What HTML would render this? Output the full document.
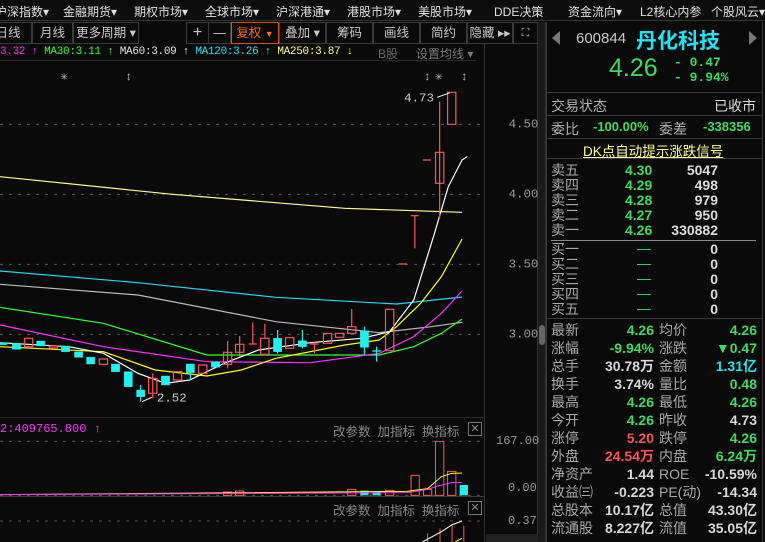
<!DOCTYPE html>
<html><head><meta charset="utf-8"><style>
*{margin:0;padding:0;box-sizing:border-box}
body{width:765px;height:542px;background:#0a0a0a;overflow:hidden;position:relative;font-family:"Liberation Sans","Noto Sans CJK SC",sans-serif;color:#c8c8c8}
.a{position:absolute;white-space:nowrap}
.nav{font-size:12px;color:#e0e0e0;top:3px}
.tb{position:absolute;top:22px;height:22px;border:1px solid #3a3a3a;font-size:12.5px;color:#c8c8c8;text-align:center;line-height:20px}
.g{color:#3ddc5f}.r{color:#ff5252}.c{color:#20e4f4}.w{color:#d8d8d8}
.m{font-family:"Liberation Mono","Noto Sans CJK SC",monospace}
.lab{font-size:14px;color:#b0b0b0}
.hl{position:absolute;height:1px;background:#3a3a3a}
.q{position:absolute;font-size:14px;line-height:15px}
.s{position:absolute;font-size:14px;line-height:18px;font-weight:bold}
.s .l{font-weight:normal;color:#a8a8a8}
</style></head><body>
<div class="a" style="left:0;top:0;width:765px;height:21px;background:#0d0d0d;border-bottom:1px solid #333"></div>
<div class="a nav" style="left:-5px">沪深指数▾</div>
<div class="a nav" style="left:63px">金融期货▾</div>
<div class="a nav" style="left:134px">期权市场▾</div>
<div class="a nav" style="left:205px">全球市场▾</div>
<div class="a nav" style="left:276px">沪深港通▾</div>
<div class="a nav" style="left:347px">港股市场▾</div>
<div class="a nav" style="left:418px">美股市场▾</div>
<div class="a nav" style="left:494px">DDE决策</div>
<div class="a nav" style="left:568px">资金流向▾</div>
<div class="a nav" style="left:640px">L2核心内参</div>
<div class="a nav" style="left:711px">个股风云▾</div>
<div class="tb" style="left:-16px;width:48px">日线</div>
<div class="tb" style="left:32px;width:41px">月线</div>
<div class="tb" style="left:73px;width:66px">更多周期 ▾</div>
<div class="tb" style="left:186px;width:23px;font-size:16px">+</div>
<div class="tb" style="left:208px;width:23px">—</div>
<div class="tb" style="left:231px;width:48px;border-color:#e0501a;color:#ff6a20">复权 <span style="font-size:9px">▼</span></div>
<div class="tb" style="left:279px;width:47px">叠加 ▾</div>
<div class="tb" style="left:326px;width:47px">筹码</div>
<div class="tb" style="left:373px;width:47px">画线</div>
<div class="tb" style="left:420px;width:47px">简约</div>
<div class="tb" style="left:467px;width:46px">隐藏 ▸▸</div>
<div class="tb" style="left:513px;width:25px;font-size:11px">⛶</div>
<div class="a m" style="left:0;top:46px;font-size:11px;letter-spacing:-0.3px"><span style="color:#ff30ff">3.32 ↑</span> <span style="color:#30ff30">MA30:3.11 ↑</span> <span style="color:#e0e0e0">MA60:3.09 ↑</span> <span style="color:#20e4f4">MA120:3.26 ↑</span> <span style="color:#ffff80">MA250:3.87</span> <span style="color:#ffff40">↓</span></div>
<div class="a" style="left:378px;top:45px;font-size:12px;color:#666">B股</div>
<div class="a" style="left:416px;top:45px;font-size:12px;color:#777">设置均线 ▾</div>
<div class="hl" style="left:0;top:60px;width:476px;background:#2a2a2a"></div>
<div class="a" style="left:484px;top:44px;width:1px;height:498px;background:#333"></div>
<div class="a" style="left:537px;top:22px;width:9px;height:520px;background:#1a1a1a;border-left:1px solid #333;border-right:1px solid #333"></div>
<div class="a" style="left:539px;top:325px;width:6px;height:20px;background:#666;border-radius:3px"></div>
<svg class="a" style="left:0;top:60px" width="540" height="360" viewBox="0 0 1566 1080" preserveAspectRatio="none">
<g stroke="#555" stroke-dasharray="3,6" vector-effect="non-scaling-stroke">
<line x1="0" y1="193" x2="1405" y2="193" vector-effect="non-scaling-stroke"/><line x1="0" y1="403" x2="1405" y2="403" vector-effect="non-scaling-stroke"/><line x1="0" y1="613" x2="1405" y2="613" vector-effect="non-scaling-stroke"/><line x1="0" y1="823" x2="1405" y2="823" vector-effect="non-scaling-stroke"/></g>
<g fill="none" stroke-width="1.2">
<polyline vector-effect="non-scaling-stroke" stroke="#ffff99" points="0,350 500,403 1000,445 1340,457"/>
<polyline vector-effect="non-scaling-stroke" stroke="#20d8f0" points="0,633 400,668 800,712 1150,732 1340,711"/>
<polyline vector-effect="non-scaling-stroke" stroke="#bbb" points="0,673 400,705 800,785 1100,818 1250,800 1340,787"/>
<polyline vector-effect="non-scaling-stroke" stroke="#30ff30" points="0,742 300,790 600,885 1100,885 1200,860 1280,820 1340,777"/>
<polyline vector-effect="non-scaling-stroke" stroke="#ff30ff" points="0,795 300,860 600,905 900,908 1100,880 1200,830 1280,760 1340,693"/>
<polyline vector-effect="non-scaling-stroke" stroke="#ffff00" points="0,860 300,875 450,930 600,948 700,930 800,895 1000,855 1100,840 1150,800 1220,730 1280,650 1340,537"/>
<polyline vector-effect="non-scaling-stroke" stroke="#fff" points="0,848 200,860 300,880 400,940 480,970 550,960 650,910 750,870 900,848 1050,835 1130,815 1200,720 1260,520 1300,380 1340,300 1355,290"/>
</g>
<g stroke-width="1.2">
<g fill="#20f0f0" stroke="#20f0f0">
<rect x="0" y="848" width="20" height="6"/><rect x="36" y="850" width="24" height="18"/><rect x="106" y="843" width="24" height="15"/><rect x="178" y="858" width="24" height="17"/><rect x="216" y="875" width="24" height="17"/><rect x="251" y="892" width="24" height="20"/><rect x="323" y="912" width="24" height="23"/><rect x="360" y="935" width="24" height="45"/><rect x="396" y="990" width="24" height="20"/><rect x="468" y="948" width="24" height="27"/><rect x="540" y="912" width="24" height="26"/><rect x="613" y="905" width="24" height="17"/><rect x="793" y="835" width="24" height="40"/><rect x="865" y="842" width="24" height="18"/><rect x="1045" y="812" width="24" height="50"/><rect x="1080" y="872" width="24" height="2"/>
</g>
<g fill="none" stroke="#ff5555" vector-effect="non-scaling-stroke">
<rect vector-effect="non-scaling-stroke" x="71" y="835" width="24" height="25"/><rect vector-effect="non-scaling-stroke" x="143" y="858" width="24" height="6"/><rect vector-effect="non-scaling-stroke" x="288" y="897" width="24" height="16"/><rect vector-effect="non-scaling-stroke" x="431" y="955" width="24" height="45"/><rect vector-effect="non-scaling-stroke" x="503" y="935" width="24" height="25"/><rect vector-effect="non-scaling-stroke" x="576" y="915" width="24" height="25"/><rect vector-effect="non-scaling-stroke" x="648" y="877" width="24" height="36"/><rect vector-effect="non-scaling-stroke" x="683" y="853" width="24" height="24"/><rect vector-effect="non-scaling-stroke" x="756" y="835" width="24" height="48"/><rect vector-effect="non-scaling-stroke" x="828" y="833" width="24" height="32"/><rect vector-effect="non-scaling-stroke" x="938" y="820" width="24" height="30"/><rect vector-effect="non-scaling-stroke" x="973" y="820" width="24" height="12"/><rect vector-effect="non-scaling-stroke" x="1008" y="800" width="24" height="20"/><rect vector-effect="non-scaling-stroke" x="1118" y="748" width="24" height="124"/><rect vector-effect="non-scaling-stroke" x="1263" y="277" width="24" height="93"/><rect vector-effect="non-scaling-stroke" x="1298" y="97" width="24" height="96"/>
<path vector-effect="non-scaling-stroke" d="M443 940V1015M660 843V925M695 828V890M733 787V852M721 852H745M768 792V835M912 845V880M900 852H924M1020 747V800M1156 612H1180M1203 467V565M1191 467H1215M1226 300H1250M1275 125V475"/>
</g>
<path stroke="#20f0f0" vector-effect="non-scaling-stroke" d="M1092 860V905M1080 873H1104M1057 800V885M805 810V880M877 810V865M552 938V960M408 975V1025"/>
</g>
<g fill="#ccc" font-size="36" font-family="Liberation Mono,monospace">
<text x="1172" y="125">4.73</text><text x="455" y="1025">2.52</text>
<text x="1475" y="202" fill="#999">4.50</text><text x="1475" y="412" fill="#999">4.00</text><text x="1475" y="622" fill="#999">3.50</text><text x="1475" y="832" fill="#999">3.00</text>
<text x="175" y="60" fill="#bbb">✳</text><text x="362" y="60" fill="#bbb">↕</text><text x="1228" y="60" fill="#bbb">↕</text><text x="1262" y="60" fill="#bbb">✳</text><text x="1335" y="60" fill="#bbb">↕</text>
</g>
<path d="M1268 112L1305 98M412 1025L440 1012" stroke="#fff" vector-effect="non-scaling-stroke"/>
</svg>
<div class="hl" style="left:0;top:417px;width:484px;background:#2a2a2a"></div>
<div class="a m" style="left:0;top:422px;font-size:12px;color:#ff30ff">2:409765.800 ↑</div>
<div class="a" style="left:333px;top:421px;font-size:12.5px;color:#888">改参数 &nbsp;加指标 &nbsp;换指标</div>
<div class="a" style="left:468px;top:422px;width:14px;height:14px;border:1px solid #777;color:#888;font-size:11px;line-height:12px;text-align:center">✕</div>
<div class="a m" style="left:496px;top:434px;font-size:12px;color:#999">167.00</div>
<div class="a m" style="left:508px;top:481px;font-size:12px;color:#999">0.00</div>
<svg class="a" style="left:0;top:410px" width="540" height="132" viewBox="0 0 1566 396" preserveAspectRatio="none">
<g stroke="#555" stroke-dasharray="3,6"><line x1="0" y1="94" x2="1405" y2="94" vector-effect="non-scaling-stroke"/><line x1="0" y1="256" x2="1405" y2="256" vector-effect="non-scaling-stroke"/><line x1="0" y1="333" x2="1405" y2="333" vector-effect="non-scaling-stroke"/></g>
<g fill="none" stroke="#ff5555"><rect vector-effect="non-scaling-stroke" x="1192" y="196" width="24" height="60"/><rect vector-effect="non-scaling-stroke" x="1263" y="94" width="24" height="162"/><rect vector-effect="non-scaling-stroke" x="1298" y="184" width="24" height="72"/><rect vector-effect="non-scaling-stroke" x="1228" y="238" width="24" height="18"/><rect vector-effect="non-scaling-stroke" x="1008" y="238" width="24" height="18"/><rect vector-effect="non-scaling-stroke" x="648" y="246" width="24" height="10"/><rect vector-effect="non-scaling-stroke" x="683" y="243" width="24" height="13"/><rect vector-effect="non-scaling-stroke" x="1118" y="241" width="24" height="15"/>
<path vector-effect="non-scaling-stroke" d="M1240 370V396M1276 355V396M1311 345V396M1345 348V396"/></g>
<rect x="1333" y="225" width="24" height="31" fill="#20f0f0"/><rect x="1045" y="242" width="24" height="14" fill="#20f0f0"/><rect x="1080" y="246" width="24" height="10" fill="#20f0f0"/>
<polyline fill="none" stroke="#ffff00" vector-effect="non-scaling-stroke" points="0,254 1180,244 1240,236 1280,200 1310,190 1340,189"/>
<polyline fill="none" stroke="#ff30ff" vector-effect="non-scaling-stroke" points="0,254 1180,248 1240,238 1270,228 1310,218 1340,217"/>
<polyline fill="none" stroke="#fff" vector-effect="non-scaling-stroke" points="1225,396 1280,365 1310,345 1340,333"/>
<polyline fill="none" stroke="#ffff00" vector-effect="non-scaling-stroke" points="1320,396 1340,385"/>
</svg>
<div class="hl" style="left:0;top:496px;width:484px;background:#3a3a3a"></div>
<div class="a" style="left:333px;top:500px;font-size:12.5px;color:#888">改参数 &nbsp;加指标 &nbsp;换指标</div>
<div class="a" style="left:468px;top:501px;width:14px;height:14px;border:1px solid #777;color:#888;font-size:11px;line-height:12px;text-align:center">✕</div>
<div class="a m" style="left:508px;top:514px;font-size:12px;color:#999">0.37</div>
<div class="a" style="left:486px;top:534px;width:52px;height:8px;background:#222"></div>
<div class="a" style="left:546px;top:22px;width:1px;height:520px;background:#3a3a3a"></div>
<div class="a" style="left:762px;top:22px;width:1px;height:520px;background:#3a3a3a"></div>
<div class="a" style="left:552px;top:31px;width:0;height:0;border-top:7px solid transparent;border-bottom:7px solid transparent;border-right:8px solid #777"></div>
<div class="a" style="left:749px;top:31px;width:0;height:0;border-top:7px solid transparent;border-bottom:7px solid transparent;border-left:8px solid #777"></div>
<div class="a" style="left:576px;top:30px;font-size:15px;color:#c8c8c8">600844</div>
<div class="a" style="left:636px;top:25px;font-size:21px;color:#20e4f4;font-weight:bold">丹化科技</div>
<div class="a g" style="left:609px;top:54px;font-size:25px">4.26</div>
<div class="a g m" style="left:674px;top:55px;font-size:13px;font-weight:bold">- 0.47</div>
<div class="a g m" style="left:674px;top:70px;font-size:13px;font-weight:bold">- 9.94%</div>
<div class="hl" style="left:547px;top:92px;width:215px"></div>
<div class="a lab" style="left:551px;top:96px">交易状态</div><div class="a" style="left:714px;top:96px;font-size:14px;color:#ddd">已收市</div>
<div class="hl" style="left:547px;top:115px;width:215px"></div>
<div class="a lab" style="left:551px;top:119px">委比</div><div class="a g" style="left:593px;top:119px;font-size:13px;font-weight:bold">-100.00%</div>
<div class="a lab" style="left:659px;top:119px">委差</div><div class="a g" style="left:703px;top:119px;font-size:13px;font-weight:bold">-338356</div>
<div class="hl" style="left:547px;top:138px;width:215px"></div>
<div class="a" style="left:583px;top:140px;font-size:13.5px;color:#ffffa0;text-decoration:underline">DK点自动提示涨跌信号</div>
<div class="hl" style="left:547px;top:158px;width:215px"></div>
<div class="q l" style="left:551px;top:163px;color:#a8a8a8">卖五<br>卖四<br>卖三<br>卖二<br>卖一</div>
<div class="q g" style="left:625px;top:163px;font-weight:bold">4.30<br>4.29<br>4.28<br>4.27<br>4.26</div>
<div class="q" style="left:670px;top:163px;width:48px;text-align:right;color:#ddd;font-weight:bold">5047<br>498<br>979<br>950<br>330882</div>
<div class="hl" style="left:551px;top:240px;width:205px;background:#888"></div>
<div class="q" style="left:551px;top:242px;color:#a8a8a8">买一<br>买二<br>买三<br>买四<br>买五</div>
<div class="q g" style="left:637px;top:241px">—<br>—<br>—<br>—<br>—</div>
<div class="q" style="left:700px;top:242px;width:18px;text-align:right;color:#ddd;font-weight:bold">0<br>0<br>0<br>0<br>0</div>
<div class="hl" style="left:547px;top:318px;width:215px"></div>
<div class="s" style="left:551px;top:321px"><span class="l">最新<br>涨幅<br>总手<br>换手<br>最高<br>今开<br>涨停<br>外盘<br>净资产<br>收益㈢<br>总股本<br>流通股</span></div>
<div class="s" style="left:590px;top:321px;width:64px;text-align:right"><span class="g">4.26</span><br><span class="g">-9.94%</span><br><span class="w">30.78万</span><br><span class="w">3.74%</span><br><span class="g">4.26</span><br><span class="g">4.26</span><br><span class="r">5.20</span><br><span class="r">24.54万</span><br><span class="w">1.44</span><br><span class="w">-0.223</span><br><span class="w">10.17亿</span><br><span class="w">8.227亿</span></div>
<div class="s" style="left:659px;top:321px"><span class="l">均价<br>涨跌<br>金额<br>量比<br>最低<br>昨收<br>跌停<br>内盘<br>ROE<br>PE(动)<br>总值<br>流值</span></div>
<div class="s" style="left:690px;top:321px;width:67px;text-align:right"><span class="g">4.26</span><br><span class="g">▼0.47</span><br><span class="c">1.31亿</span><br><span class="g">0.48</span><br><span class="g">4.26</span><br><span class="w">4.73</span><br><span class="g">4.26</span><br><span class="g">6.24万</span><br><span class="w">-10.59%</span><br><span class="w">-14.34</span><br><span class="w">43.30亿</span><br><span class="w">35.05亿</span></div>
</body></html>
